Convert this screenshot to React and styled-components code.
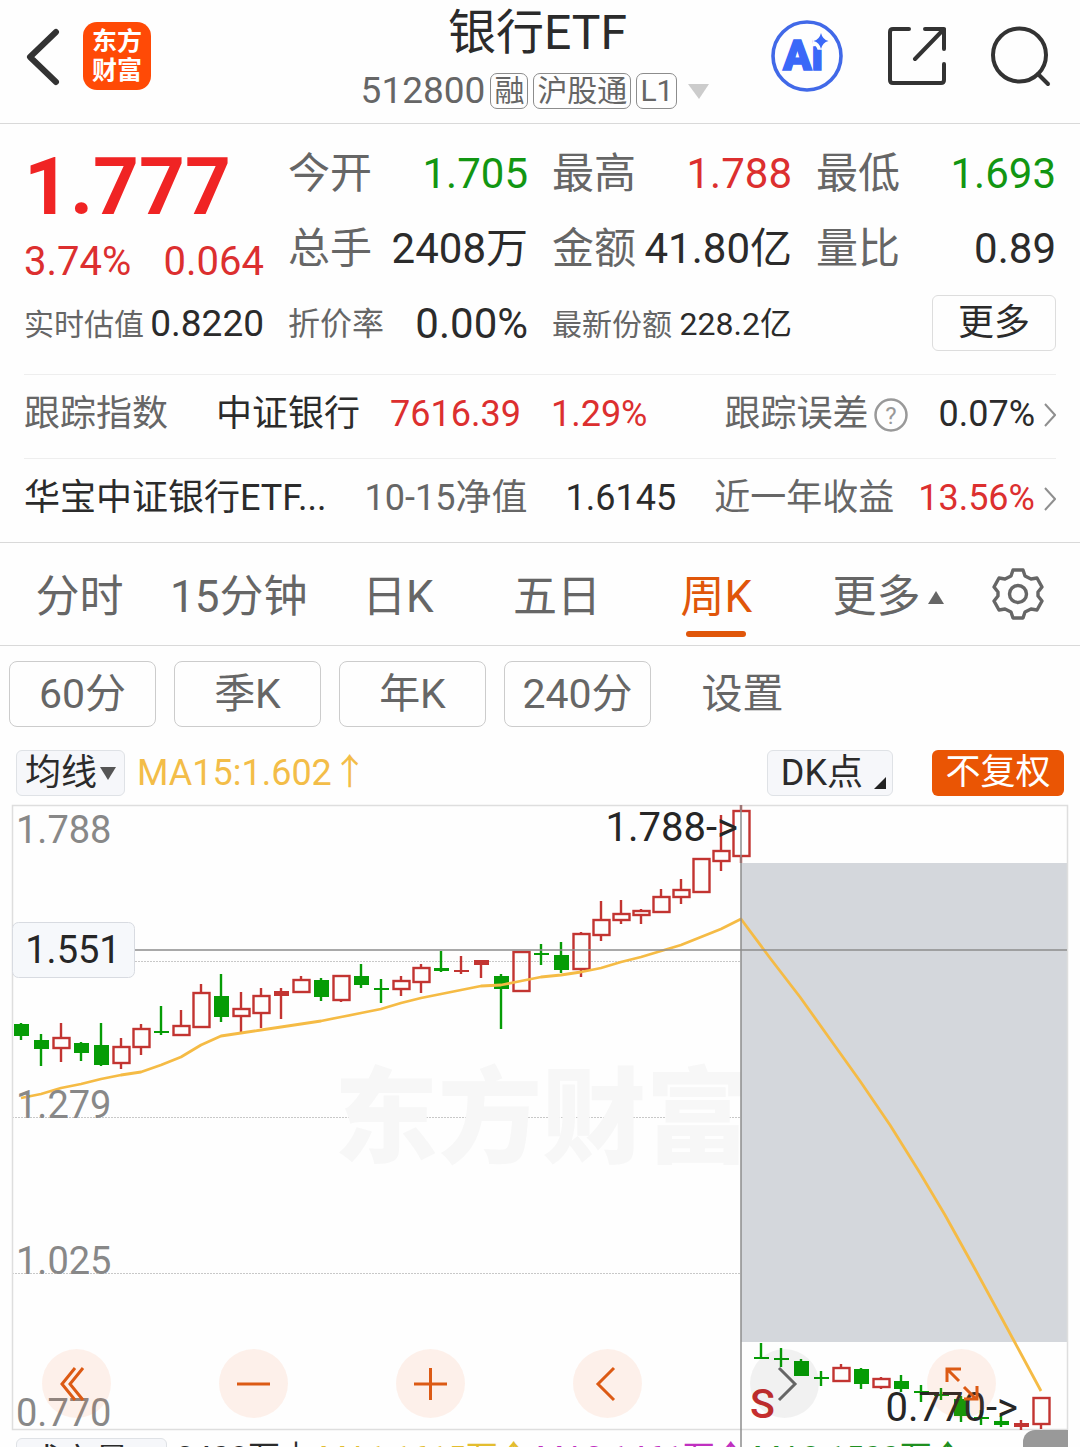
import React from 'react';
import styled, { createGlobalStyle, css } from 'styled-components';

const ink = '#2b2b2b';
const grey = '#666666';
const red = '#dc2f2f';
const green = '#129612';
const orange = '#ea5504';
const line = '#d9d9d9';

const candleRed = '#c23431';
const candleGreen = '#069c06';

const Global = createGlobalStyle`
  * { box-sizing: border-box; }
  body {
    margin: 0;
    background: #fefefe;
    color: ${ink};
    font-family: Roboto, "Noto Sans CJK SC", sans-serif;
    line-height: 1.2;
  }
  button {
    margin: 0;
    padding: 0;
    border: 0;
    background: none;
    color: inherit;
    font: inherit;
    cursor: pointer;
  }
  svg { display: block; flex: none; }
`;

const Page = styled.div`
  height: 100vh;
  overflow: hidden;
`;

/* ---------- header ---------- */

const Header = styled.header`
  display: grid;
  grid-template-columns: 1fr auto 1fr;
  align-items: start;
  height: 124px;
  padding: 0 29px 0 24px;
  border-bottom: 1px solid ${line};
`;

const HeaderSide = styled.div`
  display: flex;
  align-items: center;
  justify-content: ${(p) => (p.$end ? 'flex-end' : 'flex-start')};
  gap: ${(p) => (p.$end ? 45 : 22)}px;
  height: 112px;
`;

const Logo = styled.button`
  width: 68px;
  height: 68px;
  padding: 5px 0;
  border-radius: 14px;
  background: #ff4a06;
  color: #fff;
  font-size: 25px;
  font-weight: 700;
  line-height: 29px;
`;

const TitleBlock = styled.div`
  display: flex;
  flex-direction: column;
  align-items: center;
`;

const Title = styled.h1`
  margin: 0;
  font-size: 48px;
  font-weight: 400;
  line-height: 66px;
`;

const SubTitle = styled.div`
  display: flex;
  align-items: center;
  gap: 5px;
  height: 50px;
  color: ${grey};
`;

const Code = styled.span`
  font-size: 37px;
  line-height: 50px;
`;

const Tag = styled.span`
  padding: 0 3px;
  border: 1px solid #8c8c8c;
  border-radius: 7px;
  font-size: 30px;
  line-height: 34px;
`;

/* ---------- quote ---------- */

const Quote = styled.section`
  display: grid;
  grid-template-columns: repeat(4, 1fr);
  grid-auto-rows: 75px;
  column-gap: 24px;
  margin: 0 24px;
  padding: 13px 0 12px;
`;

const PriceCell = styled.div`
  grid-row: span 2;
  color: ${red};
`;

const Price = styled.div`
  color: #f02424;
  font-size: 80px;
  font-weight: 700;
  line-height: 100px;
`;

const Change = styled.div`
  display: flex;
  justify-content: space-between;
  font-size: 40px;
  line-height: 50px;
`;

const Cell = styled.div`
  display: flex;
  align-items: center;
  justify-content: space-between;
  white-space: nowrap;
`;

const CellLabel = styled.span`
  color: ${grey};
  font-size: ${(p) => p.$size || 42}px;
`;

const CellValue = styled.span`
  color: ${(p) => p.$color || ink};
  font-size: ${(p) => p.$size || 42}px;
`;

const MoreCell = styled(Cell)`
  justify-content: flex-end;
  padding-bottom: 4px;
`;

const MoreButton = styled.button`
  width: 124px;
  height: 56px;
  border: 1px solid #dddddd;
  border-radius: 6px;
  font-size: 36px;
  line-height: 52px;
`;

const InfoRow = styled.div`
  display: flex;
  align-items: center;
  justify-content: space-between;
  height: 84px;
  margin: 0 24px;
  padding-bottom: 4px;
  border-top: 1px solid #eeeeee;
  font-size: 36px;
  white-space: nowrap;
`;

const InfoGroup = styled.div`
  display: flex;
  align-items: center;
  gap: ${(p) => p.$gap}px;
`;

const Tone = styled.span`
  color: ${(p) => p.$color || ink};
`;

const HintLabel = styled.div`
  display: flex;
  align-items: center;
  gap: 6px;
  color: ${grey};
`;

/* ---------- tabs ---------- */

const Tabs = styled.nav`
  display: flex;
  height: 104px;
  border-top: 1px solid ${line};
  border-bottom: 1px solid ${line};
`;

const Tab = styled.button`
  flex: 1;
  display: flex;
  flex-direction: column;
  align-items: center;
  padding-top: 24px;
  color: ${(p) => (p.$active ? '#e0560a' : grey)};
  font-size: 44px;
  line-height: 60px;
  white-space: nowrap;

  &::after {
    content: '';
    width: 60px;
    height: 6px;
    margin-top: 4px;
    border-radius: 3px;
    background: ${(p) => (p.$active ? '#e0560a' : 'transparent')};
  }
`;

const TabText = styled.span`
  display: flex;
  align-items: center;
  gap: 8px;
  padding-left: ${(p) => (p.$wide ? 26 : 0)}px;
`;

const GearButton = styled.button`
  display: flex;
  align-items: center;
  justify-content: center;
  width: 125px;
`;

const Chips = styled.div`
  display: flex;
  gap: 18px;
  padding: 15px 9px 0;
`;

const Chip = styled.button`
  width: 147px;
  height: 66px;
  font-size: 41px;
  line-height: 62px;
  color: ${grey};
  ${(p) => !p.$plain && css`
    border: 1px solid #cccccc;
    border-radius: 8px;
  `}
`;

/* ---------- chart ---------- */

const Legend = styled.div`
  display: flex;
  align-items: center;
  height: 78px;
  padding: 14px 16px 0;
  font-size: 36px;
`;

const SoftButton = styled.button`
  display: flex;
  align-items: ${(p) => (p.$corner ? 'flex-end' : 'center')};
  gap: ${(p) => (p.$corner || p.$wide ? 11 : 3)}px;
  height: 46px;
  padding: ${(p) => (p.$corner ? '0 6px 6px 13px' : p.$wide ? '0 10px' : '0 8px')};
  border: 1px solid #dfe2e6;
  border-radius: 6px;
  background: #f6f7fa;
  line-height: 44px;
  white-space: nowrap;
`;

const SoftText = styled.span`
  height: ${(p) => (p.$corner ? 38 : 44)}px;
`;

const MaText = styled.span`
  margin-left: 12px;
  color: #f3bd48;
  line-height: 44px;
`;

const LegendEnd = styled.div`
  display: flex;
  gap: 39px;
  margin-left: auto;
`;

const AdjustButton = styled.button`
  width: 132px;
  height: 46px;
  border-radius: 6px;
  background: ${orange};
  color: #fff;
  font-size: 35px;
  line-height: 44px;
`;

const ChartBox = styled.section`
  position: relative;
  margin: 0 12px;
`;

const Chart = styled.svg`
  width: 100%;
  height: auto;
  overflow: visible;
`;

const ChartControls = styled.div`
  position: absolute;
  left: 0;
  right: 0;
  bottom: 12px;
  display: flex;
  justify-content: space-between;
  padding: 0 72px 0 30px;
`;

const RoundButton = styled.button`
  display: flex;
  align-items: center;
  justify-content: center;
  width: 69px;
  height: 69px;
  border-radius: 50%;
  color: #dc5a14;
  background: rgba(245, 100, 30, 0.09);
  ${(p) => p.$muted && css`
    color: #666666;
    background: rgba(0, 0, 0, 0.05);
  `}
`;

const VolumeRow = styled.div`
  display: flex;
  align-items: flex-start;
  gap: 9px;
  padding: 8px 16px 0;
  font-size: 34px;
  white-space: nowrap;
`;

const VolumeItem = styled.span`
  width: ${(p) => p.$width}px;
  color: ${(p) => p.$color};
  font-size: 32px;
  line-height: 38px;
`;

const SideHandle = styled.button`
  position: absolute;
  right: 0;
  top: 100%;
  width: 45px;
  height: 60px;
  border-radius: 12px 0 0 0;
  background: #999999;
`;

// [colour, high, low, body top, body bottom, solid]
const mainCandles = [
  ['g', 1023, 1040, 1024, 1036], ['g', 1034, 1066, 1040, 1049], ['r', 1023, 1062, 1037, 1049],
  ['g', 1042, 1061, 1043, 1053], ['g', 1023, 1066, 1045, 1065], ['r', 1038, 1069, 1046, 1064],
  ['r', 1024, 1055, 1028, 1048], ['g', 1006, 1035, 1031, 1033], ['r', 1010, 1036, 1025, 1036],
  ['r', 984, 1028, 992, 1028], ['g', 974, 1022, 996, 1017], ['r', 992, 1032, 1008, 1017],
  ['r', 988, 1028, 995, 1014], ['r', 988, 1019, 991, 996, 1], ['r', 976, 993, 979, 993],
  ['g', 978, 1001, 980, 997], ['r', 975, 1002, 975, 1001], ['g', 964, 988, 976, 985],
  ['g', 979, 1003, 988, 990], ['r', 976, 996, 980, 990], ['r', 964, 993, 967, 983],
  ['g', 951, 972, 968, 971], ['r', 956, 974, 970, 972, 1], ['r', 960, 978, 960, 965, 1],
  ['g', 974, 1029, 976, 989], ['r', 951, 992, 951, 992], ['g', 944, 965, 953, 955],
  ['g', 942, 973, 955, 970], ['r', 932, 977, 933, 970], ['r', 901, 941, 919, 936],
  ['r', 900, 924, 913, 921], ['r', 909, 924, 910, 916], ['r', 889, 913, 896, 913],
  ['r', 879, 904, 889, 898], ['r', 858, 893, 858, 893], ['r', 815, 871, 850, 862],
  ['r', 805, 863, 810, 857],
];

const lowCandles = [
  ['g', 1343, 1359, 1357, 1359], ['g', 1348, 1367, 1358, 1360], ['g', 1359, 1376, 1361, 1376],
  ['g', 1371, 1386, 1377, 1379], ['r', 1364, 1382, 1367, 1382], ['g', 1368, 1389, 1369, 1384],
  ['r', 1377, 1389, 1378, 1388], ['g', 1375, 1392, 1381, 1389], ['g', 1385, 1402, 1391, 1393],
  ['g', 1388, 1400, 1394, 1396], ['g', 1396, 1422, 1399, 1416], ['g', 1410, 1425, 1417, 1419],
  ['g', 1416, 1427, 1421, 1425], ['r', 1420, 1430, 1423, 1427, 1], ['r', 1397, 1429, 1397, 1425],
];

function Candle({ x, data }) {
  const [tone, high, low, top, bottom, solid] = data;
  const color = tone === 'r' ? candleRed : candleGreen;
  const hollow = tone === 'r' && !solid;
  return (
    <g stroke={color} strokeWidth="2.4">
      {high < top && <line x1={x} x2={x} y1={high} y2={top} />}
      {low > bottom && <line x1={x} x2={x} y1={bottom} y2={low} />}
      {hollow ? (
        <rect x={x - 7.5} y={top + 1} width="16" height={bottom - top - 2} fill="none" />
      ) : (
        <rect x={x - 7} y={top} width="15" height={bottom - top} fill={color} stroke="none" />
      )}
    </g>
  );
}

function KLineChart() {
  return (
    <Chart viewBox="12 805 1056 625" role="img" aria-label="周K">
      <g stroke="#c8c8c8" strokeWidth="1" strokeDasharray="2 1">
        <line x1="12" x2="741" y1="961.5" y2="961.5" />
        <line x1="12" x2="741" y1="1117.5" y2="1117.5" />
        <line x1="12" x2="741" y1="1273.5" y2="1273.5" />
      </g>
      <text x="334" y="1155" fontSize="104" fontWeight="900" fill="#f7f7f7">东方财富</text>
      <rect x="741" y="806" width="326" height="57" fill="#fefefe" />
      <rect x="741" y="863" width="326" height="479" fill="#d4d7dc" />
      <rect x="12.5" y="805.5" width="1055" height="624" fill="none" stroke="#dedede" strokeWidth="1.5" />
      {mainCandles.map((c, i) => <Candle key={i} x={21 + i * 20} data={c} />)}
      {lowCandles.map((c, i) => <Candle key={i} x={761 + i * 20} data={c} />)}
      <polyline
        fill="none"
        stroke="#f5bb45"
        strokeWidth="2.8"
        strokeLinejoin="round"
        points="21,1098 41,1094 61,1088 81,1084 101,1079 121,1075 141,1072 161,1065 181,1057 201,1045 221,1036 241,1033 261,1030 281,1027 301,1024 321,1021 341,1017 361,1013 381,1009 401,1003 421,998 441,994 461,990 481,986 501,985 521,981 541,977 561,975 581,972 601,968 621,962 641,957 661,951 681,945 701,937 721,929 741,919 770,958 800,997 830,1039 860,1081 890,1125 920,1173 945,1215 975,1269 1000,1315 1020,1352 1041,1391"
      />
      <g stroke="#8d8d8d" strokeWidth="1.5">
        <line x1="134" x2="1067" y1="950" y2="950" />
        <line x1="741" x2="741" y1="805" y2="1450" />
      </g>
      <g fill="#888888" fontSize="38">
        <text x="16" y="843">1.788</text>
        <text x="16" y="1118">1.279</text>
        <text x="16" y="1274">1.025</text>
        <text x="16" y="1426">0.770</text>
      </g>
      <g fill="#262626" fontSize="40">
        <text x="738" y="841" textAnchor="end">1.788-&gt;</text>
        <text x="1018" y="1421" textAnchor="end">0.770-&gt;</text>
      </g>
      <rect x="12.5" y="922.5" width="122" height="55" rx="6" fill="#f6f8fb" stroke="#d8dbe1" />
      <text x="73" y="963" fontSize="38" fill="#262626" textAnchor="middle">1.551</text>
      <text x="750" y="1418" fontSize="41" fontWeight="500" fill="#c62f2f">S</text>
    </Chart>
  );
}

function Stroke({ size = 69, width = 3, d }) {
  return (
    <svg width={size} height={size} viewBox={`0 0 ${size} ${size}`} fill="none" stroke="currentColor" strokeWidth={width} aria-hidden="true">
      <path d={d} />
    </svg>
  );
}

function RowArrow() {
  return (
    <svg width="12" height="24" viewBox="0 0 12 24" fill="none" stroke="#8f8f8f" strokeWidth="2" aria-hidden="true">
      <path d="M1 1 L11 12 L1 23" />
    </svg>
  );
}

function AiIcon() {
  return (
    <svg width="72" height="72" viewBox="0 0 72 72" aria-hidden="true">
      <circle cx="36" cy="36" r="34" fill="none" stroke="#4169e8" strokeWidth="3.6" />
      <text x="12" y="50" fontSize="42" fontWeight="900" fill="#3a68f8" stroke="#3a68f8" strokeWidth="1.5">Ai</text>
      <path d="M50 13 Q51.5 19.500 57.500 21 Q51.500 22.500 50 29 Q48.500 22.500 42.500 21 Q48.500 19.500 50 13Z" fill="#3a68f8" stroke="#fefefe" strokeWidth="7" style={{ paintOrder: 'stroke' }} />
    </svg>
  );
}

function ShareIcon() {
  return (
    <svg width="58" height="60" viewBox="0 0 58 60" fill="none" stroke="#333" strokeWidth="4" strokeLinecap="round" strokeLinejoin="round" aria-hidden="true">
      <path d="M21 3 H5 Q2 3 2 6 V54 Q2 57 5 57 H53 Q56 57 56 54 V38 M37 3 H56 V23 M56 3 L27 33" />
    </svg>
  );
}

function SearchIcon() {
  return (
    <svg width="60" height="62" viewBox="0 0 60 62" fill="none" stroke="#333" strokeWidth="4" strokeLinecap="round" aria-hidden="true">
      <circle cx="28.500" cy="30" r="26.500" />
      <path d="M47 49 L57 59" />
    </svg>
  );
}

function GearIcon() {
  return (
    <svg width="52" height="52" viewBox="0 0 52 52" fill="none" stroke="#666" strokeWidth="3.400" strokeLinejoin="round" aria-hidden="true">
      <path d="M21 2 H31 L33 8 L39 11 L45 10 L50 19 L46 24 V28 L50 33 L45 42 L39 41 L33 44 L31 50 H21 L19 44 L13 41 L7 42 L2 33 L6 28 V24 L2 19 L7 10 L13 11 L19 8Z" />
      <circle cx="26" cy="26" r="8.500" />
    </svg>
  );
}

const Triangle = ({ w, h, d, fill }) => (
  <svg width={w} height={h} viewBox={`0 0 ${w} ${h}`} aria-hidden="true"><path d={d} fill={fill} /></svg>
);

const quoteRows = [
  { label: '今开', value: '1.705', color: green },
  { label: '最高', value: '1.788', color: red },
  { label: '最低', value: '1.693', color: green },
  { label: '总手', value: '2408万' },
  { label: '金额', value: '41.80亿' },
  { label: '量比', value: '0.89' },
  { label: '实时估值', value: '0.8220', labelSize: 30, size: 37 },
  { label: '折价率', value: '0.00%', labelSize: 32 },
  { label: '最新份额', value: '228.2亿', labelSize: 30, size: 32 },
];

const tabs = ['分时', '15分钟', '日K', '五日', '周K', '更多'];
const chips = ['60分', '季K', '年K', '240分'];

const controls = [
  { name: '最左', d: 'M33 19 L20 35 L33 51 M41 19 L28 35 L41 51' },
  { name: '缩小', d: 'M18 35 H51' },
  { name: '放大', d: 'M18 35 H51 M34.5 19 V51' },
  { name: '左移', d: 'M41 19 L25 35 L41 51' },
  { name: '右移', d: 'M29 19 L45 35 L29 51', muted: true },
  { name: '全屏', d: 'M20 33 V20 H34 M21 21 L32 32 M37 38 L49 50 M50 37 V50 H37' },
];

export default function App() {
  return (
    <Page>
      <Global />
      <Header>
        <HeaderSide>
          <button aria-label="返回">
            <svg width="37" height="60" viewBox="0 0 37 60" fill="none" stroke="#333" strokeWidth="6" strokeLinecap="round" strokeLinejoin="round" aria-hidden="true">
              <path d="M32 6 L6 31 L32 56" />
            </svg>
          </button>
          <Logo>东方<br />财富</Logo>
        </HeaderSide>
        <TitleBlock>
          <Title>银行ETF</Title>
          <SubTitle>
            <Code>512800</Code>
            <Tag>融</Tag>
            <Tag>沪股通</Tag>
            <Tag>L1</Tag>
            <Triangle w={32} h={15} d="M6 0 H27 L17 15Z" fill="#cccccc" />
          </SubTitle>
        </TitleBlock>
        <HeaderSide $end>
          <button aria-label="Ai"><AiIcon /></button>
          <button aria-label="分享"><ShareIcon /></button>
          <button aria-label="搜索"><SearchIcon /></button>
        </HeaderSide>
      </Header>

      <Quote>
        <PriceCell>
          <Price>1.777</Price>
          <Change><span>3.74%</span><span>0.064</span></Change>
        </PriceCell>
        {quoteRows.map((q) => (
          <Cell key={q.label}>
            <CellLabel $size={q.labelSize}>{q.label}</CellLabel>
            <CellValue $color={q.color} $size={q.size}>{q.value}</CellValue>
          </Cell>
        ))}
        <MoreCell><MoreButton>更多</MoreButton></MoreCell>
      </Quote>

      <InfoRow>
        <InfoGroup $gap={48}>
          <Tone $color={grey}>跟踪指数</Tone>
          <InfoGroup $gap={30}>
            <Tone>中证银行</Tone>
            <Tone $color={red}>7616.39</Tone>
            <Tone $color={red}>1.29%</Tone>
          </InfoGroup>
        </InfoGroup>
        <InfoGroup $gap={9}>
          <InfoGroup $gap={30}>
            <HintLabel>
              跟踪误差
              <svg width="34" height="34" viewBox="0 0 34 34" aria-hidden="true">
                <circle cx="17" cy="17" r="15.500" fill="none" stroke="#999" strokeWidth="2.500" />
                <text x="17" y="25.500" fontSize="24" fill="#999" textAnchor="middle">?</text>
              </svg>
            </HintLabel>
            <Tone>0.07%</Tone>
          </InfoGroup>
          <RowArrow />
        </InfoGroup>
      </InfoRow>

      <InfoRow>
        <Tone>华宝中证银行ETF...</Tone>
        <Tone $color={grey}>10-15净值</Tone>
        <Tone>1.6145</Tone>
        <InfoGroup $gap={9}>
          <InfoGroup $gap={24}>
            <Tone $color={grey}>近一年收益</Tone>
            <Tone $color={red}>13.56%</Tone>
          </InfoGroup>
          <RowArrow />
        </InfoGroup>
      </InfoRow>

      <Tabs>
        {tabs.map((t) => (
          <Tab key={t} $active={t === '周K'}>
            <TabText $wide={t === '更多'}>
              {t}
              {t === '更多' && <Triangle w={16} h={13} d="M8 0 L16 13 H0Z" fill="#666" />}
            </TabText>
          </Tab>
        ))}
        <GearButton aria-label="图表设置"><GearIcon /></GearButton>
      </Tabs>

      <Chips>
        {chips.map((c) => <Chip key={c}>{c}</Chip>)}
        <Chip $plain>设置</Chip>
      </Chips>

      <Legend>
        <SoftButton>
          <SoftText>均线</SoftText>
          <Triangle w={16} h={13} d="M0 0 H16 L8 13Z" fill="#555" />
        </SoftButton>
        <MaText>MA15:1.602↑</MaText>
        <LegendEnd>
          <SoftButton $corner>
            <SoftText $corner>DK点</SoftText>
            <Triangle w={12} h={12} d="M12 0 V12 H0Z" fill="#222" />
          </SoftButton>
          <AdjustButton>不复权</AdjustButton>
        </LegendEnd>
      </Legend>

      <ChartBox>
        <KLineChart />
        <ChartControls>
          {controls.map((c) => (
            <RoundButton key={c.name} $muted={c.muted} aria-label={c.name}><Stroke d={c.d} /></RoundButton>
          ))}
        </ChartControls>
        <SideHandle aria-label="展开" />
      </ChartBox>

      <VolumeRow>
        <SoftButton $wide>
          <SoftText>成交量</SoftText>
          <Triangle w={16} h={13} d="M0 0 H16 L8 13Z" fill="#555" />
        </SoftButton>
        <VolumeItem $width={134} $color={ink}>2408万↓</VolumeItem>
        <VolumeItem $width={208} $color="#e3bd2f">MA1:1615万↑</VolumeItem>
        <VolumeItem $width={208} $color="#c030c0">MA2:1461万↑</VolumeItem>
        <VolumeItem $width={208} $color="#1f8f1f">MA3:1500万↑</VolumeItem>
      </VolumeRow>
    </Page>
  );
}
